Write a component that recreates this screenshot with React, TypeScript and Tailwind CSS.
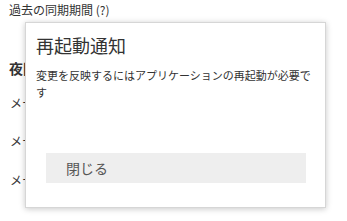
export default function App() {
  const font = { fontFamily: '"Noto Sans CJK JP", "Noto Sans", sans-serif' };
  return (
    <div className="relative w-[347px] h-[221px] bg-white overflow-hidden text-[#333]" style={font}>
      {/* settings page behind the dialog */}
      <div className="flex flex-col pl-[9px] pt-[2px]">
        <span className="text-[12px] leading-[16px]">過去の同期期間 (?)</span>
        <span className="mt-[41px] text-[14px] leading-[18px] font-bold">夜間同期</span>
        <span className="mt-[18px] text-[12px] leading-[16px] pl-[1px]">メール通知</span>
        <span className="mt-[22px] text-[12px] leading-[16px] pl-[1px]">メール通知</span>
        <span className="mt-[23px] text-[12px] leading-[16px] pl-[1px]">メール通知</span>
      </div>

      {/* restart dialog */}
      <div className="absolute left-[25px] top-[22px] w-[301px] h-[186px] bg-white border border-[#d6d6d6] shadow-[0_1px_6px_rgba(0,0,0,0.22)] flex flex-col px-[10px] pt-[10px]">
        <h2 className="text-[18px] leading-[24px] text-[#333]">再起動通知</h2>
        <p className="mt-[10px] text-[11px] leading-[17px] text-[#333]">
          変更を反映するにはアプリケーションの再起動が必要です
        </p>
        <button className="mt-auto mb-[24px] ml-[10px] mr-[9px] h-[30px] bg-[#eeeeee] text-left pl-[20px] text-[14px] text-[#555]">
          閉じる
        </button>
      </div>
    </div>
  );
}
